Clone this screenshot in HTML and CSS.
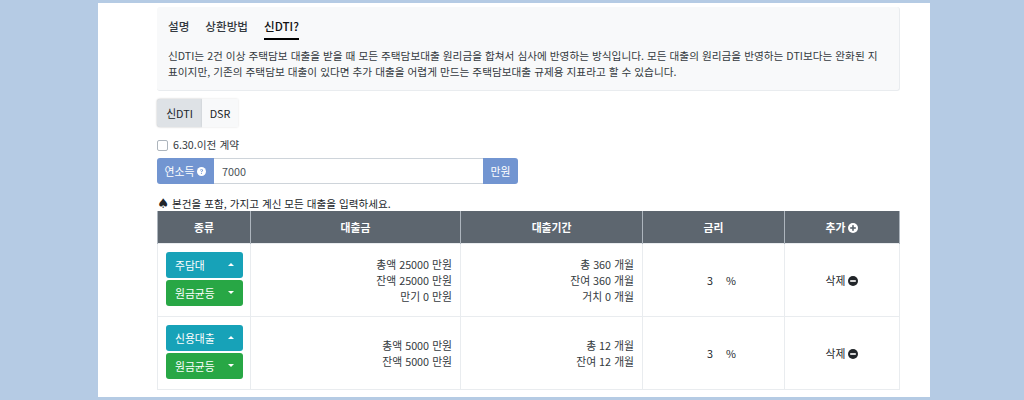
FILE: index.html
```html
<!DOCTYPE html>
<html lang="ko">
<head>
<meta charset="utf-8">
<title>신DTI</title>
<link rel="stylesheet" href="styles.css">
</head>
<body>
<main class="panel">
  <section class="card">
    <nav class="tabs">
      <a class="tab">설명</a>
      <a class="tab">상환방법</a>
      <a class="tab active">신DTI?</a>
    </nav>
    <p class="desc">신DTI는 2건 이상 주택담보 대출을 받을 때 모든 주택담보대출 원리금을 합쳐서 심사에 반영하는 방식입니다. 모든 대출의 원리금을 반영하는 DTI보다는 완화된 지표이지만, 기존의 주택담보 대출이 있다면 추가 대출을 어렵게 만드는 주택담보대출 규제용 지표라고 할 수 있습니다.</p>
  </section>
  <div class="toggle">
    <button class="toggle-btn on">신DTI</button>
    <button class="toggle-btn">DSR</button>
  </div>
  <label class="check"><span class="box"></span>6.30.이전 계약</label>
  <div class="input-group">
    <span class="addon left">연소득
      <svg class="help" viewBox="0 0 16 16"><circle cx="8" cy="8" r="8" fill="#fff"/><path d="M5.4 6.1C5.5 4.6 6.6 3.8 8.1 3.8c1.5 0 2.6.9 2.6 2.1 0 1-.6 1.5-1.3 2-.6.4-.8.7-.8 1.3v.3H7.2v-.5c0-.9.4-1.4 1-1.8.6-.4.9-.7.9-1.2 0-.6-.5-1-1.1-1-.7 0-1.1.4-1.2 1.1z" fill="#7295d1"/><circle cx="7.9" cy="11.6" r="1" fill="#7295d1"/></svg>
    </span>
    <span class="value">7000</span>
    <span class="addon right">만원</span>
  </div>
  <p class="note"><span class="spade">♠</span> 본건을 포함, 가지고 계신 모든 대출을 입력하세요.</p>
  <table class="loans">
    <colgroup>
      <col class="c1"><col class="c2"><col class="c3"><col class="c4"><col class="c5">
    </colgroup>
    <thead>
      <tr>
        <th>종류</th>
        <th>대출금</th>
        <th>대출기간</th>
        <th>금리</th>
        <th>추가 <svg class="ico" viewBox="0 0 16 16"><circle cx="8" cy="8" r="8" fill="#fff"/><rect x="3.5" y="6.7" width="9" height="2.6" fill="#5d666f"/><rect x="6.7" y="3.5" width="2.6" height="9" fill="#5d666f"/></svg></th>
      </tr>
    </thead>
    <tbody>
      <tr>
        <td class="kinds">
          <button class="pick teal"><span>주담대</span><i class="caret up"></i></button>
          <button class="pick green"><span>원금균등</span><i class="caret down"></i></button>
        </td>
        <td class="num">총액 25000 만원<br>잔액 25000 만원<br>만기 0 만원</td>
        <td class="num">총 360 개월<br>잔여 360 개월<br>거치 0 개월</td>
        <td class="rate"><span class="rate-v">3</span>%</td>
        <td class="del">삭제 <svg class="ico" viewBox="0 0 16 16"><circle cx="8" cy="8" r="8" fill="#212529"/><rect x="3.5" y="6.7" width="9" height="2.6" fill="#fff"/></svg></td>
      </tr>
      <tr>
        <td class="kinds">
          <button class="pick teal"><span>신용대출</span><i class="caret up"></i></button>
          <button class="pick green"><span>원금균등</span><i class="caret down"></i></button>
        </td>
        <td class="num">총액 5000 만원<br>잔액 5000 만원</td>
        <td class="num">총 12 개월<br>잔여 12 개월</td>
        <td class="rate"><span class="rate-v">3</span>%</td>
        <td class="del">삭제 <svg class="ico" viewBox="0 0 16 16"><circle cx="8" cy="8" r="8" fill="#212529"/><rect x="3.5" y="6.7" width="9" height="2.6" fill="#fff"/></svg></td>
      </tr>
    </tbody>
  </table>
</main>
</body>
</html>
```
FILE: styles.css
```css
* { box-sizing: border-box; }
html, body { height: 100%; }
body {
  margin: 0;
  padding: 3px 94px 3px 98px;
  background: #b5cbe4;
  font-family: "Noto Sans CJK KR", "Noto Sans", sans-serif;
  font-size: 10.8px;
  line-height: 16px;
  color: #212529;
  overflow: hidden;
}
.panel {
  height: 394px;
  background: #fff;
  padding: 4px 30px 0 59px;
  overflow: hidden;
}
.card {
  height: 84px;
  background: #f8f9fa;
  border-bottom: 1px solid #e9ecef;
  border-right: 1px solid #e9ecef;
  border-radius: 3px;
  padding: 9px 18px 0 11px;
}
.tabs { display: flex; gap: 16px; height: 24px; }
.tab { font-size: 11.6px; line-height: 20px; height: 24px; color: #343a40; font-weight: 500; }
.tab.active { color: #111; border-bottom: 2px solid #000; }
.desc { margin: 8px 0 0; font-size: 10.67px; color: #343a40; }
.toggle { display: flex; margin-top: 8px; width: 82px; height: 28px; }
.toggle-btn {
  font: inherit;
  color: #212529;
  border: 0;
  background: #f8f9fa;
  padding: 0;
  width: 36px;
  box-shadow: 0 0 2px rgba(0,0,0,.12);
}
.toggle-btn.on { width: 45px; background: #dee2e6; border-radius: 3px 0 0 3px; box-shadow: 0 0 2px rgba(0,0,0,.3); }
.check { display: flex; align-items: center; gap: 5px; margin-top: 10px; height: 16px; font-size: 10.7px; color: #343a40; }
.box { width: 11px; height: 11px; border: 1px solid #adb5bd; border-radius: 2px; background: #fff; }
.input-group { display: flex; width: 361px; height: 26px; margin-top: 5px; }
.addon { display: flex; align-items: center; justify-content: center; gap: 3px; background: #7295d1; color: #fff; }
.addon.left { width: 57px; border-radius: 3px 0 0 3px; }
.addon.right { width: 35px; border-radius: 0 3px 3px 0; }
.help { width: 9px; height: 9px; }
.value { flex: 1; border: 1px solid #ced4da; border-width: 1px 0; padding: 0 8px; line-height: 24px; color: #495057; }
.note { margin: 11px 0 0; height: 16px; line-height: 16px; font-size: 10.6px; color: #212529; }
.spade { font-size: 13.5px; font-family: "DejaVu Sans", sans-serif; }
.loans { border-collapse: collapse; table-layout: fixed; width: 742px; }
.c1 { width: 93px; }
.c2 { width: 210px; }
.c3 { width: 182px; }
.c4 { width: 142px; }
.c5 { width: 115px; }
.loans th {
  height: 32px;
  padding: 0;
  background: #5d666f;
  color: #fff;
  font-weight: 700;
  border: 1px solid #adb5bd;
  border-width: 0 1px;
  text-align: center;
}
.loans td { height: 73px; padding: 0 8px; border: 1px solid #e9ecef; vertical-align: middle; }
.loans td.kinds { padding: 8px 8px 0; vertical-align: top; }
.loans td.num { text-align: right; padding-right: 8px; color: #343a40; }
.loans td.rate, .loans td.del { text-align: center; }
.loans td.rate { padding-left: 24px; }
.rate-v { display: inline-block; margin-right: 13px; }
.ico { width: 10px; height: 10px; vertical-align: -1px; }
.pick {
  display: flex;
  justify-content: space-between;
  align-items: center;
  width: 77px;
  height: 26px;
  padding: 0 9px;
  border: 0;
  border-radius: 3px;
  font: inherit;
  color: #fff;
}
.pick + .pick { margin-top: 2px; }
.teal { background: #17a2b8; }
.green { background: #28a745; }
.caret { width: 0; height: 0; border-left: 3.5px solid transparent; border-right: 3.5px solid transparent; }
.caret.up { border-bottom: 3.5px solid #fff; }
.caret.down { border-top: 3.5px solid #fff; }
```
